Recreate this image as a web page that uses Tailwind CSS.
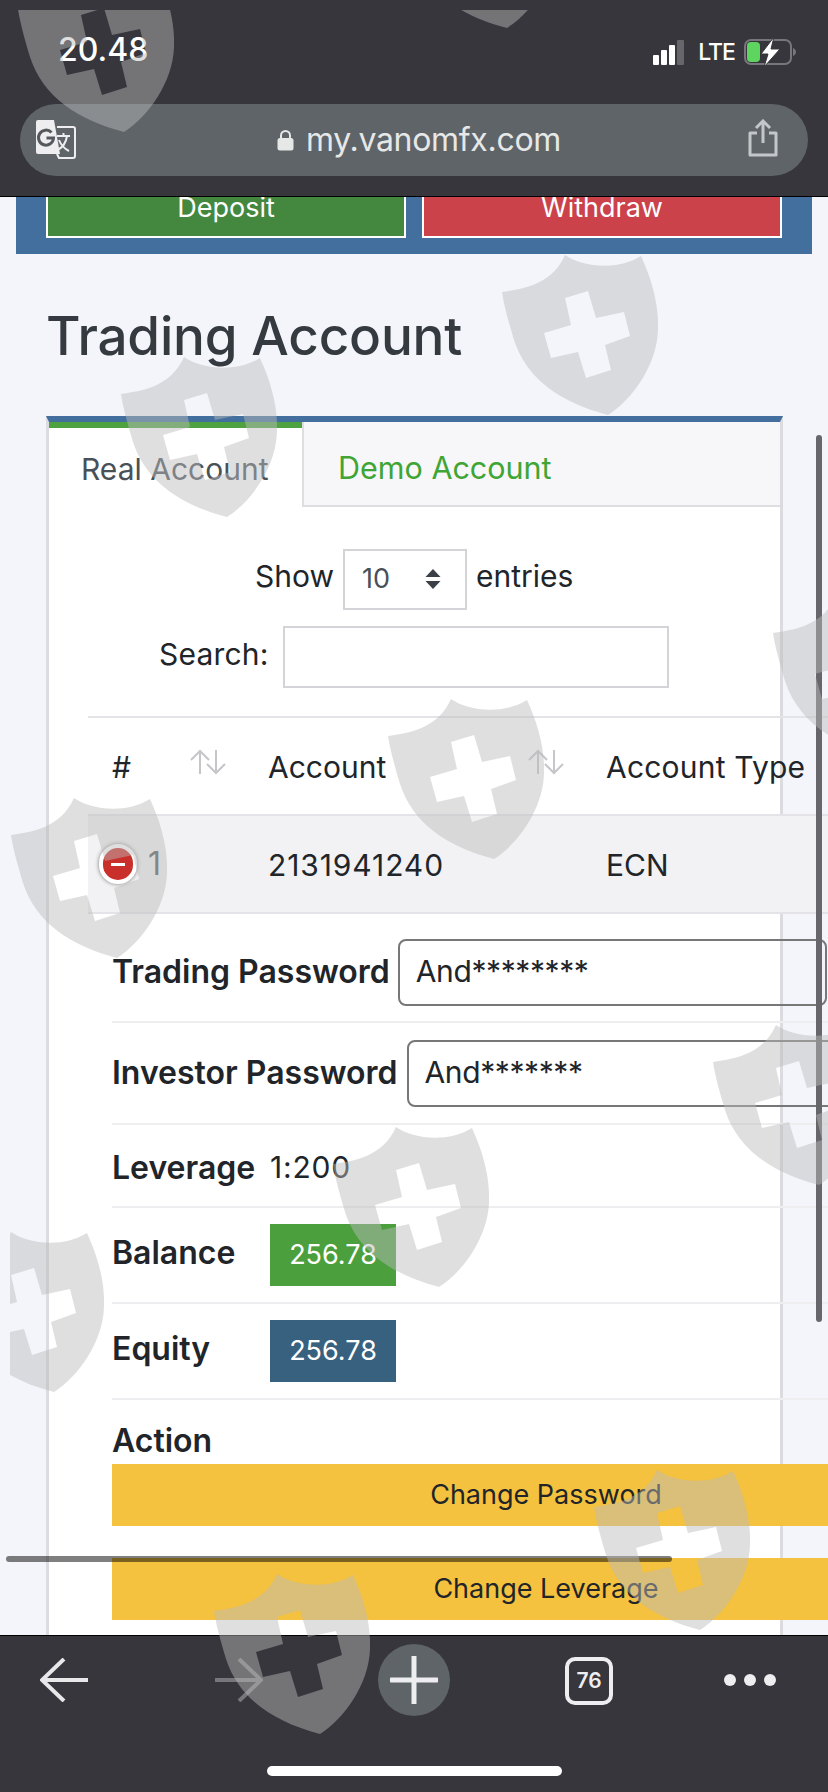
<!DOCTYPE html>
<html lang="en">
<head>
<meta charset="UTF-8">
<meta name="viewport" content="width=device-width, initial-scale=1.0">
<title>Trading Account</title>
<script src="https://cdn.jsdelivr.net/npm/@tailwindcss/browser@4"></script>
</head>
<body class="m-0 bg-[#f4f5fb]">
<div class="relative flex flex-col w-[828px] h-[1792px] overflow-hidden font-['Inter','Liberation_Sans',sans-serif] text-[#212529]">

	<!-- Browser top bar -->
	<header class="h-[197px] shrink-0 bg-[#36363c] px-[20px] pt-[30px] border-b border-black">
		<div class="flex items-center justify-between h-[40px] pl-[38px] pr-[11px] text-white">
			<span class="text-[32px] font-medium leading-none">20.48</span>
			<div class="flex items-center mt-[4px]">
				<div class="flex items-end gap-[2px] h-[25px]">
					<span class="w-[6px] h-[10px] bg-white rounded-[1px]"></span>
					<span class="w-[6px] h-[15px] bg-white rounded-[1px]"></span>
					<span class="w-[6px] h-[20px] bg-white rounded-[1px]"></span>
					<span class="w-[7px] h-[25px] bg-[#66666b] rounded-[1px]"></span>
				</div>
				<span class="ml-[14px] text-[23px] font-medium leading-none tracking-[-1px]">LTE</span>
				<svg class="ml-[9px]" width="53" height="32" viewBox="0 0 53 32">
					<rect x="1" y="4" width="46" height="24" rx="6" fill="none" stroke="#77777b" stroke-width="2"/>
					<rect x="3" y="6" width="13" height="20" rx="4" fill="#5dd55f"/>
					<path d="M49 12c2 1 3 2.500 3 4s-1 3-3 4z" fill="#77777b"/>
					<path d="M30 1 L17 18 H24 L20 31 L36 13 H27 Z" fill="#fff" stroke="#36363c" stroke-width="1"/>
				</svg>
			</div>
		</div>
		<div class="relative flex items-center justify-center h-[72px] mt-[34px] pl-[10px] rounded-[36px] bg-[#5f6468] text-[#e6e8e8]">
			<svg class="absolute left-[15px] top-[15px]" width="42" height="42" viewBox="0 0 42 42">
				<path d="M3 1 H19 L25 35 H3 a2 2 0 0 1 -2 -2 V3 a2 2 0 0 1 2 -2 Z" fill="#eeeef0"/>
				<path d="M22 8 H38 a2 2 0 0 1 2 2 V37 a2 2 0 0 1 -2 2 H24 L22 35" fill="none" stroke="#eeeef0" stroke-width="2"/>
				<path d="M16.500 13.500 a7.500 7.500 0 1 0 2 5.500 h-7" fill="none" stroke="#55595d" stroke-width="3"/>
				<path d="M22 17 H35 M28.500 14 V17 M32 17 C31 24 27 29 22 31 M24 21 C26 26 30 30 34 32" fill="none" stroke="#eeeef0" stroke-width="2"/>
			</svg>
			<svg width="17" height="22" viewBox="0 0 17 22" class="mr-[12px]">
				<path d="M4 10 V6.500 a4.500 4.500 0 0 1 9 0 V10" fill="none" stroke="#e6e8e8" stroke-width="2"/>
				<rect x="0.500" y="9" width="16" height="12.500" rx="2.500" fill="#e6e8e8"/>
			</svg>
			<span class="text-[32px] leading-none tracking-[-0.3px]">my.vanomfx.com</span>
			<svg class="absolute right-[30px] top-[15px]" width="30" height="38" viewBox="0 0 30 38">
				<path d="M9 14 H2 V36 H28 V14 H21" fill="none" stroke="#c4c7c9" stroke-width="3" stroke-linejoin="round"/>
				<path d="M15 24 V2 M8 9 L15 2 L22 9" fill="none" stroke="#c4c7c9" stroke-width="3"/>
			</svg>
		</div>
	</header>

	<!-- Page content -->
	<main class="flex-1 overflow-hidden">
		<div class="flex gap-[16px] mx-[16px] h-[57px] px-[30px] bg-[#426f9e]">
			<div class="flex-1 flex items-center justify-center h-[41px] bg-[#44883f] border-2 border-t-0 border-white text-white text-[27px] pb-[17px]">Deposit</div>
			<div class="flex-1 flex items-center justify-center h-[41px] bg-[#cb424b] border-2 border-t-0 border-white text-white text-[27px] pb-[17px]">Withdraw</div>
		</div>

		<h1 class="ml-[46px] mt-[47px] text-[53px] leading-[70px] font-medium tracking-[-0.2px] text-[#343a40]">Trading Account</h1>

		<div class="relative ml-[46px] mt-[45px] w-[737px] h-[1300px] bg-white border-x-[3px] border-[#dcdce0] border-t-[6px] border-t-[#426f9e]">
			<div class="flex h-[85px]">
				<div class="w-[253px] pl-[32px] border-t-[6px] border-[#4ea340] text-[#495057] text-[30px] leading-[83px]">Real Account</div>
				<div class="flex-1 pl-[34px] bg-[#f7f7f9] border-l-2 border-b-2 border-[#dedee0] text-[#3fa535] text-[30.500px] leading-[92px]">Demo Account</div>
			</div>

			<div class="flex items-center h-[62px] mt-[41px] pl-[206px] text-[30px]">
				<span class="pb-[5px]">Show</span>
				<div class="flex items-center justify-between w-[124px] h-[61px] ml-[9px] pl-[17px] pr-[24px] border-2 border-[#d4d4d8] text-[#495057] text-[27px]">
					<span>10</span>
					<svg width="16" height="22" viewBox="0 0 16 22"><path d="M8 1 L15.500 9 H0.500 Z M8 21 L15.500 13 H0.500 Z" fill="#3b4046"/></svg>
				</div>
				<span class="ml-[9px] pb-[5px]">entries</span>
			</div>

			<div class="flex items-center h-[62px] mt-[16px] pl-[110px] text-[30px]">
				<span class="w-[124px] pb-[5px] tracking-[0.2px]">Search:</span>
				<div class="w-[386px] h-[62px] border-2 border-[#d4d4d8]"></div>
			</div>

			<table class="ml-[39px] mt-[28px] w-[740px] table-fixed border-collapse text-[30px]">
				<thead>
					<tr class="h-[98px] border-y-2 border-[#e4e4e8]">
						<th class="relative w-[156px] pl-[24px] pt-[2px] text-left font-normal">#
							<svg class="absolute left-[102px] top-[31px]" width="36" height="26" viewBox="0 0 36 26"><path d="M10 25 V2 M1 11 L10 2 L19 11 M26 1 V24 M17 15 L26 24 L35 15" fill="none" stroke="#c6c6ca" stroke-width="2"/></svg>
						</th>
						<th class="relative w-[338px] pl-[24px] pt-[2px] text-left font-normal">Account
							<svg class="absolute left-[284px] top-[31px]" width="36" height="26" viewBox="0 0 36 26"><path d="M10 25 V2 M1 11 L10 2 L19 11 M26 1 V24 M17 15 L26 24 L35 15" fill="none" stroke="#c6c6ca" stroke-width="2"/></svg>
						</th>
						<th class="pl-[24px] pt-[2px] text-left font-normal whitespace-nowrap tracking-[0.2px]">Account Type</th>
					</tr>
				</thead>
				<tbody>
					<tr class="h-[98px] bg-[#f2f2f4] border-b-2 border-[#e4e4e8]">
						<td class="pl-[10px]">
							<div class="flex items-center gap-[11px]">
								<span class="flex items-center justify-center w-[38px] h-[40px] ml-[1px] rounded-full bg-[#c9302c] border-[4px] border-white shadow-[0_0_4px_#777]">
									<span class="w-[14px] h-[3px] bg-white"></span>
								</span>
								<span class="text-[32px] text-[#555]">1</span>
							</div>
						</td>
						<td class="pl-[24px] pt-[3px] tracking-[0.9px]">2131941240</td>
						<td class="pl-[24px] pt-[3px]">ECN</td>
					</tr>
				</tbody>
			</table>

			<!-- Account details -->
			<div class="ml-[63px] w-[720px] text-[30px]">
				<div class="flex items-center h-[109px] pt-[9px] border-b-2 border-[#eeeef0]">
					<span class="text-[32px] font-semibold whitespace-nowrap pb-[1px]">Trading Password</span>
					<div class="shrink-0 ml-[8px] w-[429px] h-[67px] pl-[16px] leading-[60px] tracking-[-0.4px] border-2 border-[#777] rounded-[8px]">And********</div>
				</div>
				<div class="flex items-center h-[102px] border-b-2 border-[#eeeef0]">
					<span class="text-[32px] font-semibold whitespace-nowrap pb-[1px]">Investor Password</span>
					<div class="shrink-0 ml-[9px] w-[430px] h-[67px] pl-[16px] leading-[60px] tracking-[-0.4px] border-2 border-[#777] rounded-[8px]">And*******</div>
				</div>
				<div class="flex items-center h-[83px] pt-[4px] border-b-2 border-[#eeeef0]">
					<span class="w-[158px] text-[32px] font-semibold">Leverage</span>
					<span class="tracking-[0.8px]">1:200</span>
				</div>
				<div class="flex items-center h-[96px] border-b-2 border-[#eeeef0]">
					<span class="w-[158px] text-[32px] font-semibold pb-[4px]">Balance</span>
					<span class="flex items-center justify-center w-[126px] h-[62px] bg-[#4b9f3d] text-white text-[27px]">256.78</span>
				</div>
				<div class="flex items-center h-[96px] border-b-2 border-[#eeeef0]">
					<span class="w-[158px] text-[32px] font-semibold pb-[4px]">Equity</span>
					<span class="flex items-center justify-center w-[126px] h-[62px] bg-[#38607f] text-white text-[27px]">256.78</span>
				</div>
				<div class="pt-[21px] leading-[40px] text-[32px] font-semibold">Action</div>
				<div class="flex items-center justify-center w-[868px] h-[62px] bg-[#f4c23f] text-[27px] mt-[3px]">Change Password</div>
				<div class="flex items-center justify-center w-[868px] h-[62px] bg-[#f4c23f] text-[27px] mt-[32px]">Change Leverage</div>
			</div>
		</div>
	</main>

	<!-- Browser bottom bar -->
	<footer class="relative flex items-start h-[157px] shrink-0 bg-[#36363c] border-t border-black pl-[40px] pt-[22px]">
		<svg class="shrink-0" width="48" height="44" viewBox="0 0 48 44"><path d="M48 22 H3 M24 1 L2 22 L24 43" fill="none" stroke="#e8e8ea" stroke-width="4"/></svg>
		<svg class="shrink-0 ml-[127px]" width="48" height="44" viewBox="0 0 48 44"><path d="M0 22 H45 M24 1 L46 22 L24 43" fill="none" stroke="#77777b" stroke-width="4"/></svg>
		<div class="flex items-center justify-center shrink-0 -mt-[14px] ml-[115px] w-[72px] h-[72px] rounded-full bg-[#5f6468]">
			<svg width="48" height="48" viewBox="0 0 48 48"><path d="M24 1 V47 M1 24 H47" fill="none" stroke="#eeeef0" stroke-width="5" stroke-linecap="round"/></svg>
		</div>
		<div class="flex items-center justify-center shrink-0 -mt-[1px] ml-[115px] w-[48px] h-[48px] rounded-[10px] border-[4px] border-[#eeeef0] text-[#eeeef0] text-[21px] font-semibold">76</div>
		<div class="flex items-center gap-[8px] h-[44px] ml-[111px]">
			<span class="w-[12px] h-[12px] rounded-full bg-[#eeeef0]"></span>
			<span class="w-[12px] h-[12px] rounded-full bg-[#eeeef0]"></span>
			<span class="w-[12px] h-[12px] rounded-full bg-[#eeeef0]"></span>
		</div>
		<div class="absolute left-[267px] top-[130px] w-[295px] h-[10px] rounded-full bg-white"></div>
	</footer>

	<!-- Scrollbars -->
	<div class="absolute left-[816px] top-[435px] w-[6px] h-[887px] rounded-full bg-[#67676b]"></div>
	<div class="absolute left-[6px] top-[1556px] w-[666px] h-[6px] rounded-full bg-black/50"></div>

	<!-- Watermark -->
	<svg class="hidden">
		<symbol id="shield" viewBox="0 0 156 160">
			<path fill-rule="evenodd" fill="#bbb" fill-opacity="0.47" d="M0 37 C20 34 50 30 63 0 C80 12 115 16 139 1 C150 25 157 50 156 75 C155 110 130 145 106 160 C60 148 25 125 12 85 C6 65 2 50 0 37 Z M63 43 L86 36 L94 63 L122 57 L128 81 L103 90 L109 115 L84 123 L76 97 L49 103 L42 78 L69 70 Z"/>
		</symbol>
	</svg>
	<div class="absolute left-[10px] top-[10px] right-0 bottom-0 overflow-hidden pointer-events-none">
		<svg class="absolute left-[8px] top-[-38px]" width="156" height="160"><use href="#shield"/></svg>
		<svg class="absolute left-[391px] top-[-142px]" width="156" height="160"><use href="#shield"/></svg>
		<svg class="absolute left-[492px] top-[245px]" width="156" height="160"><use href="#shield"/></svg>
		<svg class="absolute left-[111px] top-[347px]" width="156" height="160"><use href="#shield"/></svg>
		<svg class="absolute left-[378px] top-[689px]" width="156" height="160"><use href="#shield"/></svg>
		<svg class="absolute left-[1px] top-[788px]" width="156" height="160"><use href="#shield"/></svg>
		<svg class="absolute left-[763px] top-[586px]" width="156" height="160"><use href="#shield"/></svg>
		<svg class="absolute left-[703px] top-[1015px]" width="156" height="160"><use href="#shield"/></svg>
		<svg class="absolute left-[323px] top-[1117px]" width="156" height="160"><use href="#shield"/></svg>
		<svg class="absolute left-[-62px] top-[1222px]" width="156" height="160"><use href="#shield"/></svg>
		<svg class="absolute left-[584px] top-[1460px]" width="156" height="160"><use href="#shield"/></svg>
		<svg class="absolute left-[204px] top-[1564px]" width="156" height="160"><use href="#shield"/></svg>
	</div>
</div>
</body>
</html>
